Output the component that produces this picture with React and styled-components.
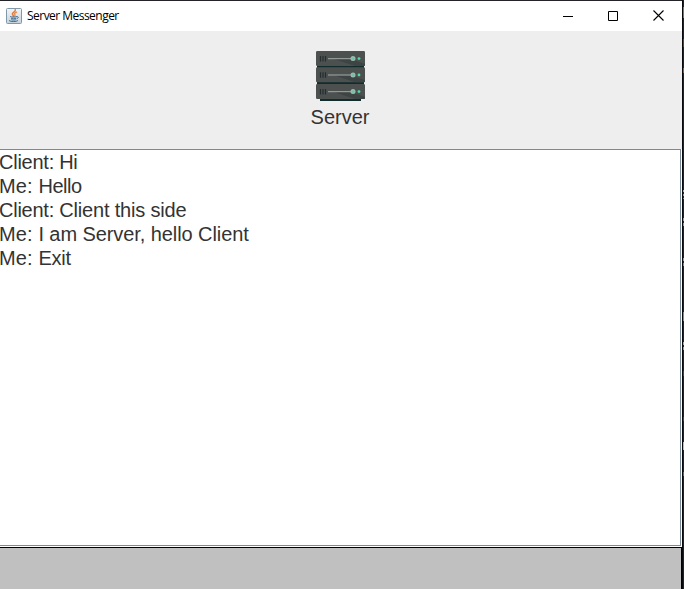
import React from "react";
import styled, { createGlobalStyle } from "styled-components";

const GlobalStyle = createGlobalStyle`
  * { box-sizing: border-box; }
  body { margin: 0; background: #15171b; overflow: hidden; }
`;

const Desktop = styled.div`
  display: grid;
  grid-template-columns: 682px 2px;
  width: 684px;
  height: 589px;
  background: #15171b;
`;

const Window = styled.main`
  display: flex;
  flex-direction: column;
  border-top: 1px solid #25232a;
  background: #fff;
  overflow: hidden;
`;

const TitleBar = styled.header`
  display: flex;
  align-items: center;
  height: 30px;
  flex: none;
  padding-left: 6px;
  background: #fff;
`;

const Title = styled.span`
  flex: 1;
  margin-left: 5px;
  font: 12px/16px "Open Sans", "Noto Sans", sans-serif;
  letter-spacing: ${(p) => p.$tracking};
  color: #000;
  white-space: nowrap;
`;

const Controls = styled.div`
  display: flex;
  height: 30px;
`;

const Control = styled.button`
  display: flex;
  align-items: center;
  justify-content: center;
  width: ${(p) => p.$width || "46px"};
  padding: 0 0 ${(p) => p.$lift || "0"};
  border: 0;
  background: transparent;
`;

const Banner = styled.section`
  display: flex;
  flex-direction: column;
  align-items: center;
  flex: none;
  height: 118px;
  padding: 20px 2px 0 0;
  background: #eee;
`;

const BannerLabel = styled.span`
  margin-top: 4px;
  font: 20px/24px "Liberation Sans", Arial, sans-serif;
  color: #333;
`;

const Transcript = styled.section`
  flex: none;
  width: 681px;
  height: 397px;
  border: 1px solid #7a8a99;
  border-left: 0;
  background: #fff;
`;

const Message = styled.p`
  width: max-content;
  margin: 0 0 0 -1px;
  font: 20px/24px "Liberation Sans", Arial, sans-serif;
  color: #333;
  white-space: pre;
`;

const Phrase = styled.span`
  letter-spacing: ${(p) => p.$tracking};
`;

const InputBar = styled.footer`
  flex: 1;
  margin-top: 1px;
  border-top: 1px solid #000;
  border-right: 1px solid #000;
  background: #c0c0c0;
`;

const Edge = styled.aside`
  display: grid;
  grid-template-rows: repeat(589, 1px);
  background: linear-gradient(90deg, #080a0d 50%, #202328 50%);
`;

const EdgeMark = styled.i`
  grid-column: 1;
  grid-row: ${(p) => p.$row} / span ${(p) => p.$size};
  width: 1px;
  margin-left: 1px;
  background: ${(p) => p.$tone};
`;

const marks = [
  [8, 11, "#777"], [40, 8, "#54443f"], [69, 5, "#80604f"],
  [191, 2, "#aaa"], [195, 2, "#999"], [199, 1, "#888"],
  [219, 3, "#999"], [224, 3, "#999"], [259, 3, "#999"], [264, 3, "#888"],
  [313, 9, "#888"], [343, 3, "#aaa"], [348, 3, "#999"],
  [372, 5, "#444"], [418, 4, "#444"], [443, 8, "#bbb"], [473, 4, "#666"],
];

const senderTracking = { Client: "-0.25px", Me: "0.12px" };

const messages = [
  ["Client", "Hi", "-0.5px"],
  ["Me", "Hello", "-0.45px"],
  ["Client", "Client this side", "-0.18px"],
  ["Me", "I am Server, hello Client", "-0.08px"],
  ["Me", "Exit", "-0.2px"],
];

function JavaIcon() {
  return (
    <svg width="16" height="16" viewBox="0 0 16 16">
      <defs>
        <linearGradient id="tile" x2="0" y2="1">
          <stop stopColor="#f4f5f6" />
          <stop offset="1" stopColor="#c5d2dc" />
        </linearGradient>
      </defs>
      <rect x=".5" y=".5" width="15" height="15" rx="1" fill="url(#tile)" stroke="#8198a9" />
      <g fill="none" strokeLinecap="round">
        <path d="M9.3 1.8C10 4 5.8 4.1 6.4 6.1c.3 1 1.2 1.2.9 2.1" stroke="#e87532" strokeWidth="1.5" />
        <path d="M10.6 4.2C8.5 5 8.2 5.8 8.9 6.6c.4.6.1 1-.3 1.4" stroke="#e88a45" strokeWidth="1.3" />
        <path d="M4.5 8.7c1.5.6 4.5.6 5.8 0M5.3 10.3c1.2.6 3.3.6 4.5 0M5.7 11.8c1 .4 2.6.4 3.7 0M10.7 8.6c2.1-.5 2.2 1.4.3 2.1M3.4 12.8c1.6 1.2 7 1 8.2 0" stroke="#396b91" />
      </g>
    </svg>
  );
}

function RackUnit({ y }) {
  return (
    <g transform={`translate(0 ${y})`}>
      <rect width="49" height="15" rx="1.2" fill="#4c5150" />
      <path d="M18 8h17l14 5v1q0 1-1 1H39z" fill="#3e4443" />
      <path d="M4.5 5v5.5M7 5v5.5M9.5 5v5.5" stroke="#252d2e" strokeWidth="1.2" />
      <path d="M12 7.7h23" stroke="#a1aaa7" strokeWidth="1" />
      <circle cx="37" cy="7.6" r="2.5" fill="#9abbb0" />
      <circle cx="37" cy="7.6" r="1.2" fill="#64c6a5" />
      <circle cx="43" cy="7.6" r="1.4" fill="#4cdca8" />
    </g>
  );
}

function ServerIcon() {
  return (
    <svg width="49" height="50" viewBox="0 0 49 50">
      <path d="M1 14h47v3H1zM1 30h47v4H1zM4 47h41v3H4z" fill="#112c2d" />
      <RackUnit y={0} />
      <RackUnit y={16.3} />
      <RackUnit y={33} />
    </svg>
  );
}

export default function App() {
  return (
    <>
      <GlobalStyle />
      <Desktop>
        <Window>
          <TitleBar>
            <JavaIcon />
            <Title $tracking="-0.53px">Server Messenger</Title>
            <Controls>
              <Control aria-label="Minimize" $lift="1px">
                <svg width="10" height="10"><path d="M0 5.5h10" stroke="#000" /></svg>
              </Control>
              <Control aria-label="Maximize" $width="44px">
                <svg width="10" height="10"><path d="M.5.5h9v9h-9z" fill="none" stroke="#000" /></svg>
              </Control>
              <Control aria-label="Close" $width="47px" $lift="1px">
                <svg width="11" height="11"><path d="M.5.5l10 10M10.5.5l-10 10" stroke="#000" strokeWidth="1.1" /></svg>
              </Control>
            </Controls>
          </TitleBar>
          <Banner>
            <ServerIcon />
            <BannerLabel>Server</BannerLabel>
          </Banner>
          <Transcript>
            {messages.map(([sender, text, tracking]) => (
              <Message key={text}>
                <Phrase $tracking={senderTracking[sender]}>{sender}: </Phrase>
                <Phrase $tracking={tracking}>{text}</Phrase>
              </Message>
            ))}
          </Transcript>
          <InputBar />
        </Window>
        <Edge>
          {marks.map(([row, size, tone]) => (
            <EdgeMark key={row} $row={row} $size={size} $tone={tone} />
          ))}
        </Edge>
      </Desktop>
    </>
  );
}
